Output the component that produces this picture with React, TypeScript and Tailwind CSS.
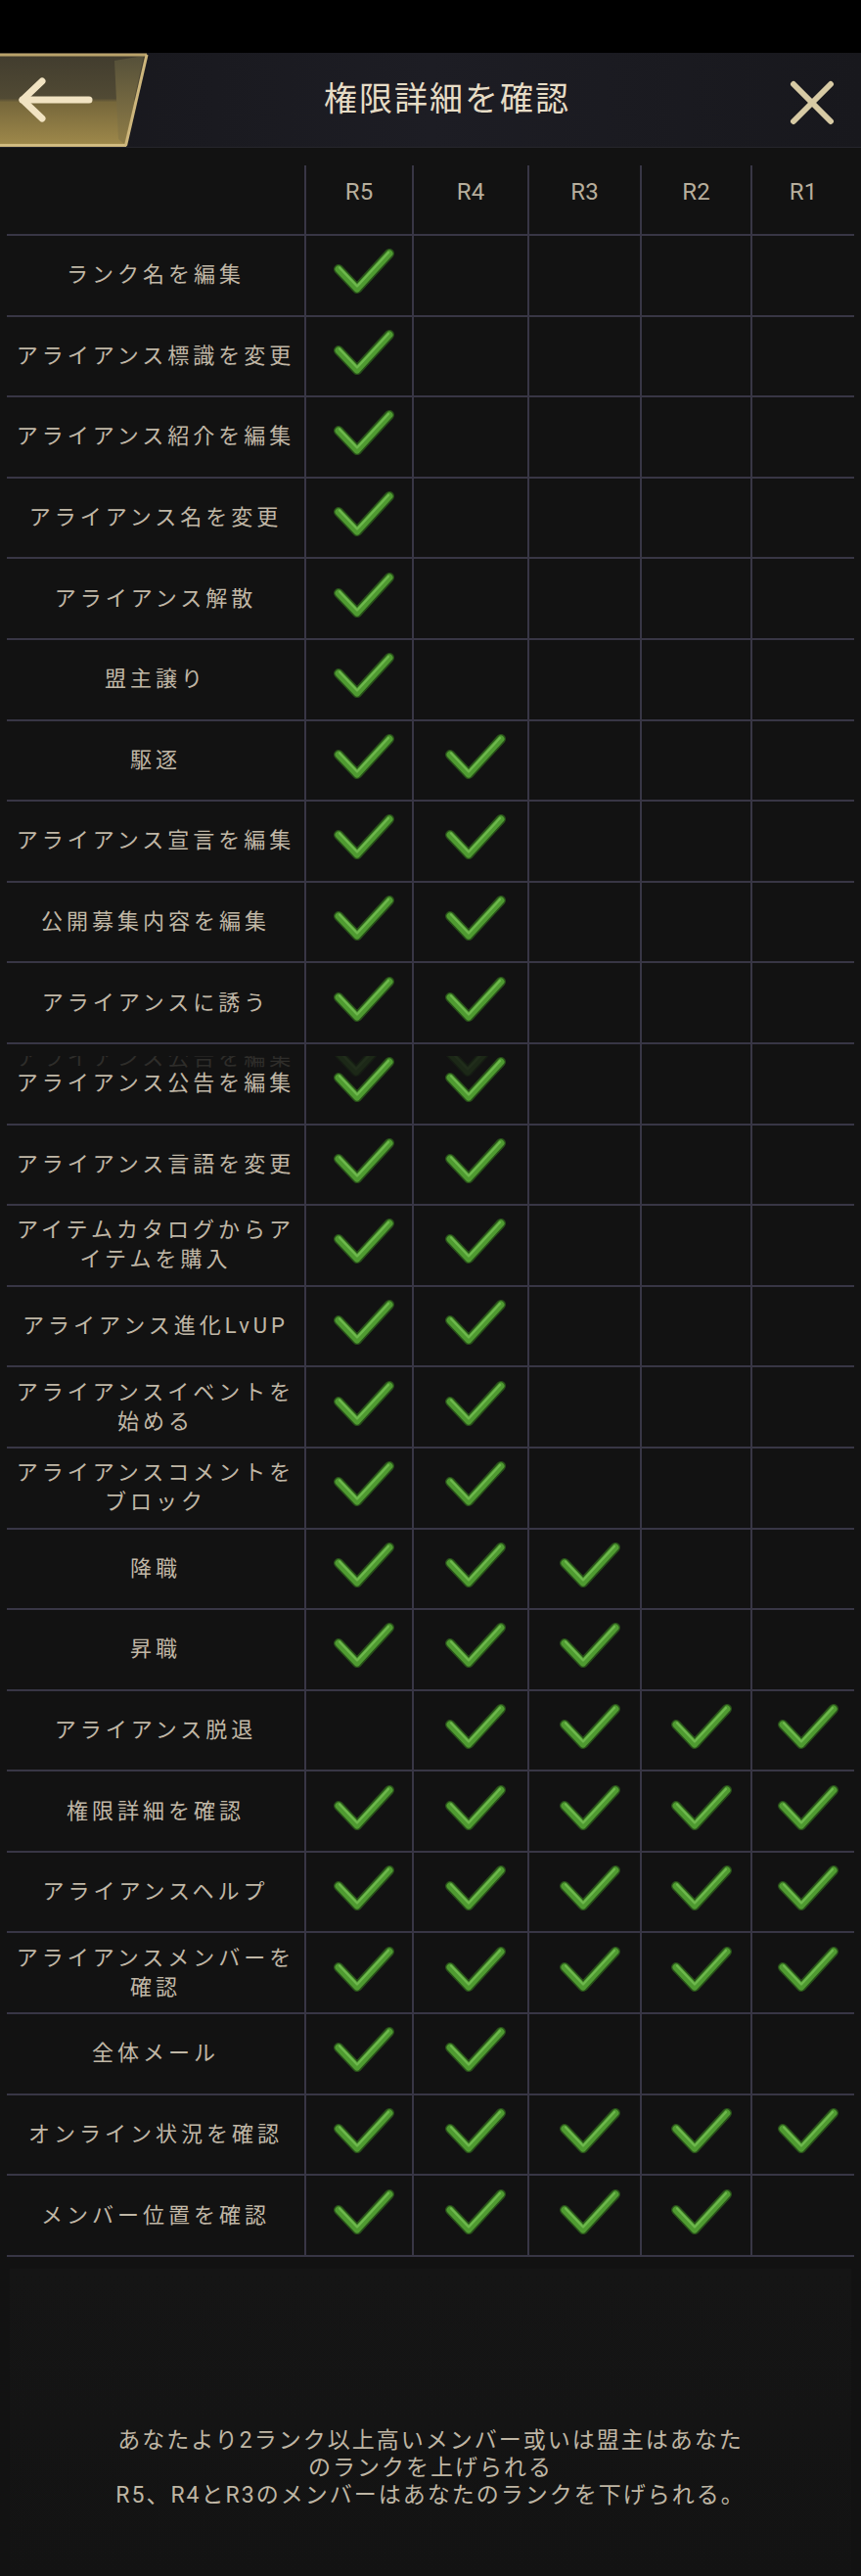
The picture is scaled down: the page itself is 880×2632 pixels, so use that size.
import React from 'react';

type Row = {
  label: string[];
  checks: boolean[];
  ghost?: boolean;
};

const Y = true;
const N = false;

const rows: Row[] = [
  { label: ['ランク名を編集'], checks: [Y, N, N, N, N] },
  { label: ['アライアンス標識を変更'], checks: [Y, N, N, N, N] },
  { label: ['アライアンス紹介を編集'], checks: [Y, N, N, N, N] },
  { label: ['アライアンス名を変更'], checks: [Y, N, N, N, N] },
  { label: ['アライアンス解散'], checks: [Y, N, N, N, N] },
  { label: ['盟主譲り'], checks: [Y, N, N, N, N] },
  { label: ['駆逐'], checks: [Y, Y, N, N, N] },
  { label: ['アライアンス宣言を編集'], checks: [Y, Y, N, N, N] },
  { label: ['公開募集内容を編集'], checks: [Y, Y, N, N, N] },
  { label: ['アライアンスに誘う'], checks: [Y, Y, N, N, N] },
  { label: ['アライアンス公告を編集'], checks: [Y, Y, N, N, N], ghost: true },
  { label: ['アライアンス言語を変更'], checks: [Y, Y, N, N, N] },
  { label: ['アイテムカタログからア', 'イテムを購入'], checks: [Y, Y, N, N, N] },
  { label: ['アライアンス進化LvUP'], checks: [Y, Y, N, N, N] },
  { label: ['アライアンスイベントを', '始める'], checks: [Y, Y, N, N, N] },
  { label: ['アライアンスコメントを', 'ブロック'], checks: [Y, Y, N, N, N] },
  { label: ['降職'], checks: [Y, Y, Y, N, N] },
  { label: ['昇職'], checks: [Y, Y, Y, N, N] },
  { label: ['アライアンス脱退'], checks: [N, Y, Y, Y, Y] },
  { label: ['権限詳細を確認'], checks: [Y, Y, Y, Y, Y] },
  { label: ['アライアンスヘルプ'], checks: [Y, Y, Y, Y, Y] },
  { label: ['アライアンスメンバーを', '確認'], checks: [Y, Y, Y, Y, Y] },
  { label: ['全体メール'], checks: [Y, Y, N, N, N] },
  { label: ['オンライン状況を確認'], checks: [Y, Y, Y, Y, Y] },
  { label: ['メンバー位置を確認'], checks: [Y, Y, Y, Y, N] },
];

const ranks = ['R5', 'R4', 'R3', 'R2', 'R1'];

const gridCols = 'grid grid-cols-[304px_110px_118px_115px_113px_106px]';
const font = "font-['Roboto','Noto_Sans_CJK_JP',sans-serif]";

function CheckMark() {
  return (
    <svg width="62" height="46" viewBox="0 0 62 46" fill="none">
      <polyline points="5,21 24,41 57,5" stroke="#28501a" strokeWidth="10" strokeLinecap="round" strokeLinejoin="round" />
      <polyline points="5,21 24,41 57,5" stroke="#4f9b31" strokeWidth="7" strokeLinecap="round" strokeLinejoin="round" />
      <polyline points="6,19.5 24,38.5 56,4" stroke="#73bd52" strokeWidth="2.2" strokeLinecap="round" strokeLinejoin="round" opacity="0.85" />
    </svg>
  );
}

function BackButton() {
  return (
    <svg width="152" height="97" viewBox="0 0 152 97">
      <defs>
        <linearGradient id="bbFill" x1="0" y1="0" x2="0" y2="1">
          <stop offset="0" stopColor="#413c2e" />
          <stop offset="0.48" stopColor="#514a34" />
          <stop offset="0.52" stopColor="#76673b" />
          <stop offset="1" stopColor="#a08a4b" />
        </linearGradient>
        <linearGradient id="bbSide" x1="0" y1="0" x2="0" y2="1">
          <stop offset="0" stopColor="#555039" />
          <stop offset="1" stopColor="#8f7d47" />
        </linearGradient>
      </defs>
      <polygon points="0,1 151,1 129,96 0,96" fill="url(#bbFill)" />
      <polygon points="117,8 147,3 127,93 121,88" fill="url(#bbSide)" />
      <line x1="0" y1="2" x2="150" y2="2" stroke="#b9a26a" strokeWidth="3" />
      <line x1="0" y1="94.5" x2="129" y2="94.5" stroke="#d1bb80" strokeWidth="3" />
      <line x1="150" y1="2" x2="128.5" y2="95" stroke="#cdb67c" strokeWidth="3" />
      <g stroke="#f1e3c2" strokeWidth="7" strokeLinecap="round" strokeLinejoin="round" fill="none">
        <line x1="23" y1="48" x2="91" y2="48" />
        <polyline points="43,29 23,48 43,67" />
      </g>
    </svg>
  );
}

function CloseIcon() {
  return (
    <svg width="46" height="46" viewBox="0 0 46 46">
      <g stroke="#d7caa4" strokeWidth="6" strokeLinecap="round">
        <line x1="4" y1="4" x2="42" y2="42" />
        <line x1="42" y1="4" x2="4" y2="42" />
      </g>
    </svg>
  );
}

function RowCells({ row }: { row: Row }) {
  return (
    <>
      <div className="flex flex-col items-center justify-center text-center text-[22px] leading-[30px] tracking-[4px] text-[#c0b7a6]">
        {row.label.map((l, i) => (
          <span key={i}>{l}</span>
        ))}
      </div>
      {row.checks.map((c, i) => (
        <div key={i} className="flex items-center justify-center border-l-2 border-[#383645] pl-[10px] pb-[8px]">
          {c && <CheckMark />}
        </div>
      ))}
    </>
  );
}

export default function App() {
  return (
    <div className={`flex h-[2632px] w-[880px] flex-col overflow-hidden bg-[#121212] ${font}`}>
      <div className="h-[54px] bg-black" />

      <div className="flex h-[97px] items-center border-b border-[#26262c] bg-gradient-to-r from-[#17171c] via-[#1d1d24] to-[#18181d]">
        <div className="w-[152px] shrink-0">
          <BackButton />
        </div>
        <div className="flex-1 pb-[2px] text-center text-[34px] tracking-[2px] text-[#e6dcc6]">
          権限詳細を確認
        </div>
        <div className="flex w-[118px] shrink-0 justify-end pr-[27px] pt-[6px]">
          <CloseIcon />
        </div>
      </div>

      <div className="px-[7px] pt-[18px]">
        <div className={`${gridCols} h-[72px] border-b-2 border-[#383645]`}>
          <div />
          {ranks.map((r) => (
            <div key={r} className="flex items-center justify-center border-l-2 border-[#383645] pb-[16px] text-[24px] text-[#b7ae9c]">
              {r}
            </div>
          ))}
        </div>

        {rows.map((row, idx) => (
          <div key={idx} className={`relative ${gridCols} h-[82.6px] border-b-2 border-[#383645]`}>
            <RowCells row={row} />
            {row.ghost && (
              <div aria-hidden="true" className="pointer-events-none absolute inset-x-0 top-[12px] h-[26px] overflow-hidden opacity-[0.16]">
                <div className={`${gridCols} absolute inset-x-0 top-[-38px] h-[80px]`}>
                  <div className="flex items-center justify-center text-[22px] tracking-[4px] text-[#c0b7a6]">
                    {row.label[0]}
                  </div>
                  {row.checks.map((c, i) => (
                    <div key={i} className="flex items-center justify-center pl-[10px] pb-[8px]">
                      {c && <CheckMark />}
                    </div>
                  ))}
                </div>
              </div>
            )}
          </div>
        ))}
      </div>

      <div className="mx-[10px] mt-[12px] flex-1 bg-gradient-to-b from-[#151515] to-[#131313] pt-[162px] text-center text-[23px] leading-[28px] tracking-[2px] text-[#bfb6a4]">
        <p>あなたより2ランク以上高いメンバー或いは盟主はあなた</p>
        <p>のランクを上げられる</p>
        <p>R5、R4とR3のメンバーはあなたのランクを下げられる。</p>
      </div>
    </div>
  );
}
